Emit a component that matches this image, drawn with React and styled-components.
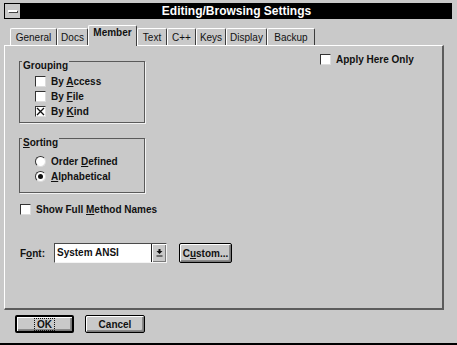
import React from "react";
import styled, { createGlobalStyle } from "styled-components";

const GlobalStyle = createGlobalStyle`
  html, body {
    margin: 0;
    padding: 0;
    background: #c9c9c9;
  }
  body {
    font-family: "Liberation Sans", Arial, sans-serif;
  }
`;

const Window = styled.div`
  width: 457px;
  height: 345px;
  box-sizing: border-box;
  background: #c9c9c9;
  padding: 3px 5px 0 4px;
  border-bottom: 2px solid #000;
  display: flex;
  flex-direction: column;
`;

const TitleBar = styled.div`
  height: 16px;
  display: flex;
  background: #000;
`;

const SysMenu = styled.div`
  width: 17px;
  box-sizing: border-box;
  background: #c9c9c9;
  border: 1px solid #000;
  display: flex;
  align-items: center;
  justify-content: center;
`;

const SysDash = styled.span`
  width: 9px;
  height: 2px;
  background: #fff;
  box-shadow: 1px 1px 0 #444;
`;

const Title = styled.div`
  flex: 1;
  text-align: center;
  color: #fff;
  font-size: 12px;
  font-weight: bold;
  line-height: 16px;
`;

const TabStrip = styled.div`
  display: flex;
  align-items: flex-end;
  height: 20px;
  margin-top: 6px;
  padding-left: 6px;
`;

const Tab = styled.div`
  width: ${(p) => p.$w}px;
  height: ${(p) => (p.$active ? 21 : 17)}px;
  margin-bottom: ${(p) => (p.$active ? -1 : 0)}px;
  box-sizing: border-box;
  position: ${(p) => (p.$active ? "relative" : "static")};
  z-index: 1;
  background: #c9c9c9;
  border-top: 1px solid #fff;
  border-left: 1px solid #fff;
  border-right: 1px solid #3c3c3c;
  border-radius: 2px 2px 0 0;
  font-size: 10px;
  font-weight: ${(p) => (p.$active ? "bold" : "normal")};
  color: #111;
  text-align: center;
  line-height: ${(p) => (p.$active ? 14 : 17)}px;
`;

const Panel = styled.div`
  height: 265px;
  margin-right: 8px;
  box-sizing: border-box;
  border-top: 1px solid #fff;
  border-left: 1px solid #fff;
  border-right: 2px solid #5c5c5c;
  border-bottom: 2px solid #5c5c5c;
  padding: 6px 0 0 14px;
  display: flex;
  flex-direction: column;
  font-size: 10px;
  font-weight: bold;
  color: #111;
`;

const TopArea = styled.div`
  display: flex;
`;

const LeftCol = styled.div`
  width: 126px;
  margin-top: 9px;
  display: flex;
  flex-direction: column;
`;

const RightCol = styled.div`
  margin-left: 175px;
`;

const GroupBox = styled.div`
  position: relative;
  height: ${(p) => p.$h}px;
  margin-top: ${(p) => p.$top || 0}px;
  box-sizing: border-box;
  border: 1px solid #5a5a5a;
  box-shadow: 1px 1px 0 #f2f2f2;
  padding: ${(p) => p.$pad}px 0 0 15px;
`;

const Legend = styled.span`
  position: absolute;
  top: -2px;
  left: 2px;
  padding: 0 1px;
  background: #c9c9c9;
  line-height: 11px;
`;

const Row = styled.div`
  display: flex;
  align-items: center;
  gap: 5px;
  height: 15px;
  white-space: nowrap;
  margin-top: ${(p) => p.$top || 0}px;
  padding-left: ${(p) => p.$indent || 0}px;
`;

const Box = styled.span`
  flex: none;
  width: 11px;
  height: 11px;
  box-sizing: border-box;
  background: #fff;
  border: 1px solid;
  border-color: #333 #dcdcdc #dcdcdc #333;
  display: flex;
  align-items: center;
  justify-content: center;
`;

const Round = styled(Box)`
  border-radius: 50%;
`;

const Dot = styled.span`
  width: 5px;
  height: 5px;
  border-radius: 50%;
  background: #111;
`;

const FontRow = styled.div`
  display: flex;
  align-items: center;
  margin-top: 26px;
  padding-left: 1px;
`;

const FieldLabel = styled.span`
  width: 34px;
`;

const Combo = styled.div`
  width: 113px;
  height: 20px;
  box-sizing: border-box;
  display: flex;
  border: 1px solid;
  border-color: #4a4a4a #f4f4f4 #f4f4f4 #4a4a4a;
  background: #fff;
`;

const ComboText = styled.span`
  flex: 1;
  padding-left: 2px;
  line-height: 18px;
`;

const ComboButton = styled.span`
  width: 15px;
  box-sizing: border-box;
  background: #c9c9c9;
  border-left: 1px solid #222;
  box-shadow: inset 1px 1px 0 #fff, inset -1px -1px 0 #7a7a7a;
  display: flex;
  align-items: center;
  justify-content: center;
`;

const Button = styled.button`
  width: ${(p) => p.$w}px;
  height: ${(p) => p.$h || 18}px;
  margin-left: ${(p) => p.$left || 0}px;
  box-sizing: border-box;
  padding: 0;
  border: ${(p) => (p.$default ? 2 : 1)}px solid #000;
  border-radius: 2px;
  background: #c9c9c9;
  box-shadow: inset 1px 1px 0 #fff, inset -1px -1px 0 #7a7a7a,
    inset -2px -2px 0 #8a8a8a;
  font-family: "Liberation Sans", Arial, sans-serif;
  font-size: 10px;
  font-weight: bold;
  color: #111;
`;

const Focus = styled.span`
  padding: 0 2px;
  outline: 1px dotted #111;
`;

const Footer = styled.div`
  display: flex;
  padding: 5px 0 0 11px;
  gap: 11px;
`;

const tabs = [
  ["General", 47],
  ["Docs", 31],
  ["Member", 49, true],
  ["Text", 30],
  ["C++", 29],
  ["Keys", 30],
  ["Display", 41],
  ["Backup", 48],
];

function Mark({ children, at }) {
  return (
    <span>
      {children.slice(0, at)}
      <u>{children[at]}</u>
      {children.slice(at + 1)}
    </span>
  );
}

function Check({ checked, label, at, ...rest }) {
  return (
    <Row {...rest}>
      <Box>
        {checked && (
          <svg width="9" height="9" viewBox="0 0 9 9">
            <path d="M1 1L8 8M8 1L1 8" stroke="#111" strokeWidth="1.3" />
          </svg>
        )}
      </Box>
      {at === undefined ? <span>{label}</span> : <Mark at={at}>{label}</Mark>}
    </Row>
  );
}

function Radio({ checked, label, at }) {
  return (
    <Row>
      <Round>{checked && <Dot />}</Round>
      <Mark at={at}>{label}</Mark>
    </Row>
  );
}

export default function App() {
  return (
    <>
      <GlobalStyle />
      <Window>
        <TitleBar>
          <SysMenu>
            <SysDash />
          </SysMenu>
          <Title>Editing/Browsing Settings</Title>
        </TitleBar>
        <TabStrip>
          {tabs.map(([name, w, active]) => (
            <Tab key={name} $w={w} $active={active}>
              {name}
            </Tab>
          ))}
        </TabStrip>
        <Panel>
          <TopArea>
            <LeftCol>
              <GroupBox $h={62} $pad={12}>
                <Legend>Grouping</Legend>
                <Check label="By Access" at={3} />
                <Check label="By File" at={3} />
                <Check label="By Kind" at={3} checked />
              </GroupBox>
              <GroupBox $h={55} $pad={15} $top={15}>
                <Legend>
                  <Mark at={0}>Sorting</Mark>
                </Legend>
                <Radio label="Order Defined" at={6} />
                <Radio label="Alphabetical" at={0} checked />
              </GroupBox>
              <Check label="Show Full Method Names" at={10} $top={9} $indent={1} />
            </LeftCol>
            <RightCol>
              <Check label="Apply Here Only" />
            </RightCol>
          </TopArea>
          <FontRow>
            <FieldLabel>
              <Mark at={1}>Font:</Mark>
            </FieldLabel>
            <Combo>
              <ComboText>System ANSI</ComboText>
              <ComboButton>
                <svg width="7" height="8" viewBox="0 0 7 8">
                  <path d="M3.5 5L0.5 2H6.5Z M2.5 0H4.5V2H2.5Z" fill="#111" />
                  <rect x="0.5" y="6.5" width="6" height="1" fill="#111" />
                </svg>
              </ComboButton>
            </Combo>
            <Button $w={53} $h={20} $left={12}>
              <Mark at={1}>Custom...</Mark>
            </Button>
          </FontRow>
        </Panel>
        <Footer>
          <Button $w={59} $default>
            <Focus>OK</Focus>
          </Button>
          <Button $w={60}>Cancel</Button>
        </Footer>
      </Window>
    </>
  );
}
